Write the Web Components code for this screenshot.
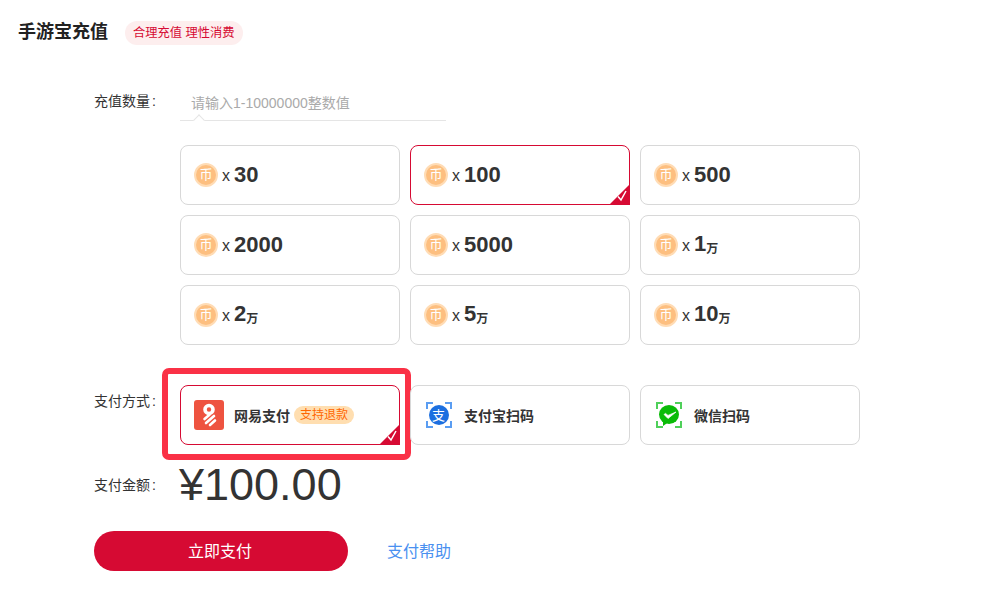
<!DOCTYPE html>
<html lang="zh">
<head>
<meta charset="utf-8">
<title>手游宝充值</title>
<style>
  html, body { margin: 0; background: #fff; }
  body {
    font-family: "Liberation Sans", "Noto Sans CJK SC", sans-serif;
    color: #333;
    width: 991px;
    height: 604px;
    overflow: hidden;
  }
</style>
</head>
<body>
<recharge-page>
  <page-title slot="head" note="合理充值 理性消费">手游宝充值</page-title>

  <form-row slot="rows" label="充值数量 :" style="--row-gap:24px;--label-top:8px">
    <amount-input placeholder="请输入1-10000000整数值"></amount-input>
  </form-row>

  <form-row slot="rows" style="--row-gap:40px">
    <option-grid>
      <coin-card count="30"></coin-card>
      <coin-card count="100" selected></coin-card>
      <coin-card count="500"></coin-card>
      <coin-card count="2000"></coin-card>
      <coin-card count="5000"></coin-card>
      <coin-card count="1" unit="万"></coin-card>
      <coin-card count="2" unit="万"></coin-card>
      <coin-card count="5" unit="万"></coin-card>
      <coin-card count="10" unit="万"></coin-card>
    </option-grid>
  </form-row>

  <form-row slot="rows" label="支付方式 :" style="--row-gap:14px;--label-top:7px">
    <option-grid>
      <pay-card icon="netease" selected highlight tag="支持退款">网易支付</pay-card>
      <pay-card icon="alipay">支付宝扫码</pay-card>
      <pay-card icon="wechat">微信扫码</pay-card>
    </option-grid>
  </form-row>

  <form-row slot="rows" label="支付金额 :" style="--row-gap:20px;--label-top:17px">
    <pay-total>¥100.00</pay-total>
  </form-row>

  <pay-actions slot="rows" help="支付帮助">立即支付</pay-actions>
</recharge-page>

<script>
  const RED = '#d60a33';

  class RechargePage extends HTMLElement {
    constructor() {
      super();
      this.attachShadow({ mode: 'open' });
      this.shadowRoot.innerHTML = `
        <style>
          :host { display: block; }
          .head { padding: 21px 0 0 18px; }
          .rows { padding: 39px 0 0 94px; }
        </style>
        <div class="head"><slot name="head"></slot></div>
        <div class="rows"><slot name="rows"></slot></div>
      `;
    }
  }

  class PageTitle extends HTMLElement {
    constructor() {
      super();
      this.attachShadow({ mode: 'open' });
      this.shadowRoot.innerHTML = `
        <style>
          :host { display: flex; align-items: center; height: 24px; }
          h1 { margin: 0; font-size: 18px; line-height: 20px; font-weight: bold; color: #222; position: relative; top: -1px; }
          span {
            margin-left: 17px;
            height: 24px;
            line-height: 24px;
            padding: 0 9px 0 8px;
            border-radius: 12px;
            background: #fdeeee;
            color: ${RED};
            font-size: 12.25px;
          }
        </style>
        <h1><slot></slot></h1>
        <span>${this.getAttribute('note')}</span>
      `;
    }
  }

  class FormRow extends HTMLElement {
    constructor() {
      super();
      this.attachShadow({ mode: 'open' });
      const label = this.getAttribute('label') || '';
      this.shadowRoot.innerHTML = `
        <style>
          :host { display: flex; margin-bottom: var(--row-gap, 0); }
          label {
            width: 86px;
            flex: none;
            padding-top: var(--label-top, 0);
            font-size: 14px;
            line-height: 18px;
            word-spacing: -2px;
            color: #333;
          }
        </style>
        <label>${label}</label>
        <slot></slot>
      `;
    }
  }

  class AmountInput extends HTMLElement {
    constructor() {
      super();
      this.attachShadow({ mode: 'open' });
      this.shadowRoot.innerHTML = `
        <style>
          :host { display: block; position: relative; width: 266px; height: 36px; border-bottom: 1px solid #e5e5e5; }
          input {
            display: block;
            box-sizing: border-box;
            width: 100%;
            height: 36px;
            padding: 0 0 0 11px;
            margin: 0;
            border: 0;
            outline: 0;
            background: transparent;
            font: 14px "Liberation Sans", "Noto Sans CJK SC", sans-serif;
            position: relative;
            top: 1px;
          }
          input::placeholder { color: #aaa; opacity: 1; }
          i {
            position: absolute;
            left: 15px;
            bottom: -4px;
            width: 7px;
            height: 7px;
            background: #fff;
            border-left: 1px solid #e5e5e5;
            border-top: 1px solid #e5e5e5;
            transform: rotate(45deg);
          }
        </style>
        <input type="text" placeholder="${this.getAttribute('placeholder')}">
        <i></i>
      `;
    }
  }

  class OptionGrid extends HTMLElement {
    constructor() {
      super();
      this.attachShadow({ mode: 'open' });
      this.shadowRoot.innerHTML = `
        <style>
          :host { display: grid; grid-template-columns: repeat(3, 220px); grid-auto-rows: 60px; gap: 10px; }
        </style>
        <slot></slot>
      `;
    }
  }

  const CARD_CSS = `
    :host {
      display: flex;
      align-items: center;
      position: relative;
      box-sizing: border-box;
      padding-left: 13px;
      border: 1px solid #d8d8d8;
      border-radius: 8px;
      background: #fff;
      color: #333;
    }
    :host([selected]) { border-color: ${RED}; }
    .mark { position: absolute; right: -1px; bottom: -1px; width: 21px; height: 21px; display: block; }
  `;
  const MARK = `
    <svg class="mark" viewBox="0 0 21 21">
      <path d="M21 0V21H0Z" fill="${RED}"/>
      <path d="M9 12.5l3 3.5 5-9" fill="none" stroke="#fff" stroke-width="1.5"/>
    </svg>
  `;

  class CoinCard extends HTMLElement {
    constructor() {
      super();
      this.attachShadow({ mode: 'open' });
      const unit = this.getAttribute('unit');
      this.shadowRoot.innerHTML = `
        <style>
          ${CARD_CSS}
          .coin {
            width: 24px;
            height: 24px;
            box-sizing: border-box;
            border: 2px solid #ffdcb5;
            border-radius: 50%;
            background: #fdbf80;
            color: #fff;
            font-size: 13px;
            line-height: 19px;
            text-align: center;
          }
          .x { margin-left: 4px; font-size: 16px; position: relative; top: 1px; }
          b { margin-left: 4px; font-size: 22px; line-height: 26px; }
          small { font-size: 12px; font-weight: bold; position: relative; top: 2px; }
        </style>
        <span class="coin">币</span>
        <span class="x">x</span>
        <b>${this.getAttribute('count')}${unit ? `<small>${unit}</small>` : ''}</b>
        ${this.hasAttribute('selected') ? MARK : ''}
      `;
    }
  }

  const PAY_ICONS = {
    netease: `
      <svg width="30" height="30" viewBox="0 0 30 30">
        <rect width="30" height="30" rx="3" fill="#ee5340"/>
        <circle cx="15" cy="9.5" r="4" fill="none" stroke="#fff" stroke-width="3.6"/>
        <g stroke="#fff" stroke-width="2.6" stroke-linecap="round">
          <path d="M10.5 19l5-4.2"/>
          <path d="M12 23l8-7"/>
          <path d="M16 25l5-4.5"/>
        </g>
      </svg>`,
    alipay: `
      <svg width="30" height="30" viewBox="0 0 30 30">
        <path d="M3 9V3H9M21 3H27V9M27 21V27H21M9 27H3V21" fill="none" stroke="#5a9df2" stroke-width="2"/>
        <circle cx="15" cy="15" r="10" fill="#1c6fe0"/>
        <text x="14.5" y="20" text-anchor="middle" font-size="13" fill="#fff" font-family="Noto Sans CJK SC, sans-serif">支</text>
      </svg>`,
    wechat: `
      <svg width="30" height="30" viewBox="0 0 30 30">
        <path d="M3 9V3H9M21 3H27V9M27 21V27H21M9 27H3V21" fill="none" stroke="#4fd05a" stroke-width="2"/>
        <ellipse cx="15" cy="14.5" rx="10" ry="9.5" fill="#09bb07"/>
        <path d="M9 21l0 5 5-3.5Z" fill="#09bb07"/>
        <path d="M10 14.5l4 4 8-6.5-8 3.4-2.5-2Z" fill="#fff" stroke="#fff" stroke-width=".7" stroke-linejoin="round"/>
      </svg>`
  };

  class PayCard extends HTMLElement {
    constructor() {
      super();
      this.attachShadow({ mode: 'open' });
      const tag = this.getAttribute('tag');
      this.shadowRoot.innerHTML = `
        <style>
          ${CARD_CSS}
          svg { flex: none; display: block; }
          .name { margin-left: 10px; font-size: 14px; font-weight: bold; color: #333; }
          .tag {
            margin-left: 4px;
            height: 18px;
            line-height: 18px;
            padding: 0 6px;
            border-radius: 9px;
            background: #ffdeb0;
            color: #f60;
            font-size: 12px;
          }
          .ring {
            position: absolute;
            left: -19px;
            top: -18px;
            right: -12px;
            bottom: -16px;
            border: 6px solid #fa3146;
            border-radius: 7px;
            pointer-events: none;
          }
        </style>
        ${PAY_ICONS[this.getAttribute('icon')]}
        <span class="name"><slot></slot></span>
        ${tag ? `<span class="tag">${tag}</span>` : ''}
        ${this.hasAttribute('selected') ? MARK : ''}
        ${this.hasAttribute('highlight') ? '<div class="ring"></div>' : ''}
      `;
    }
  }

  class PayTotal extends HTMLElement {
    constructor() {
      super();
      this.attachShadow({ mode: 'open' });
      this.shadowRoot.innerHTML = `
        <style>
          :host { display: block; margin-left: -1px; font-size: 45px; line-height: 52px; height: 52px; color: #333; }
        </style>
        <slot></slot>
      `;
    }
  }

  class PayActions extends HTMLElement {
    constructor() {
      super();
      this.attachShadow({ mode: 'open' });
      this.shadowRoot.innerHTML = `
        <style>
          :host { display: flex; align-items: center; }
          button {
            width: 254px;
            height: 40px;
            padding: 0 2px 2px 0;
            border: 0;
            border-radius: 20px;
            background: ${RED};
            color: #fff;
            font: 16px "Liberation Sans", "Noto Sans CJK SC", sans-serif;
          }
          a { margin: 0 0 3px 39px; font-size: 16px; color: #4a90f0; text-decoration: none; }
        </style>
        <button><slot></slot></button>
        <a href="#">${this.getAttribute('help')}</a>
      `;
    }
  }

  customElements.define('recharge-page', RechargePage);
  customElements.define('page-title', PageTitle);
  customElements.define('form-row', FormRow);
  customElements.define('amount-input', AmountInput);
  customElements.define('option-grid', OptionGrid);
  customElements.define('coin-card', CoinCard);
  customElements.define('pay-card', PayCard);
  customElements.define('pay-total', PayTotal);
  customElements.define('pay-actions', PayActions);
</script>
</body>
</html>
